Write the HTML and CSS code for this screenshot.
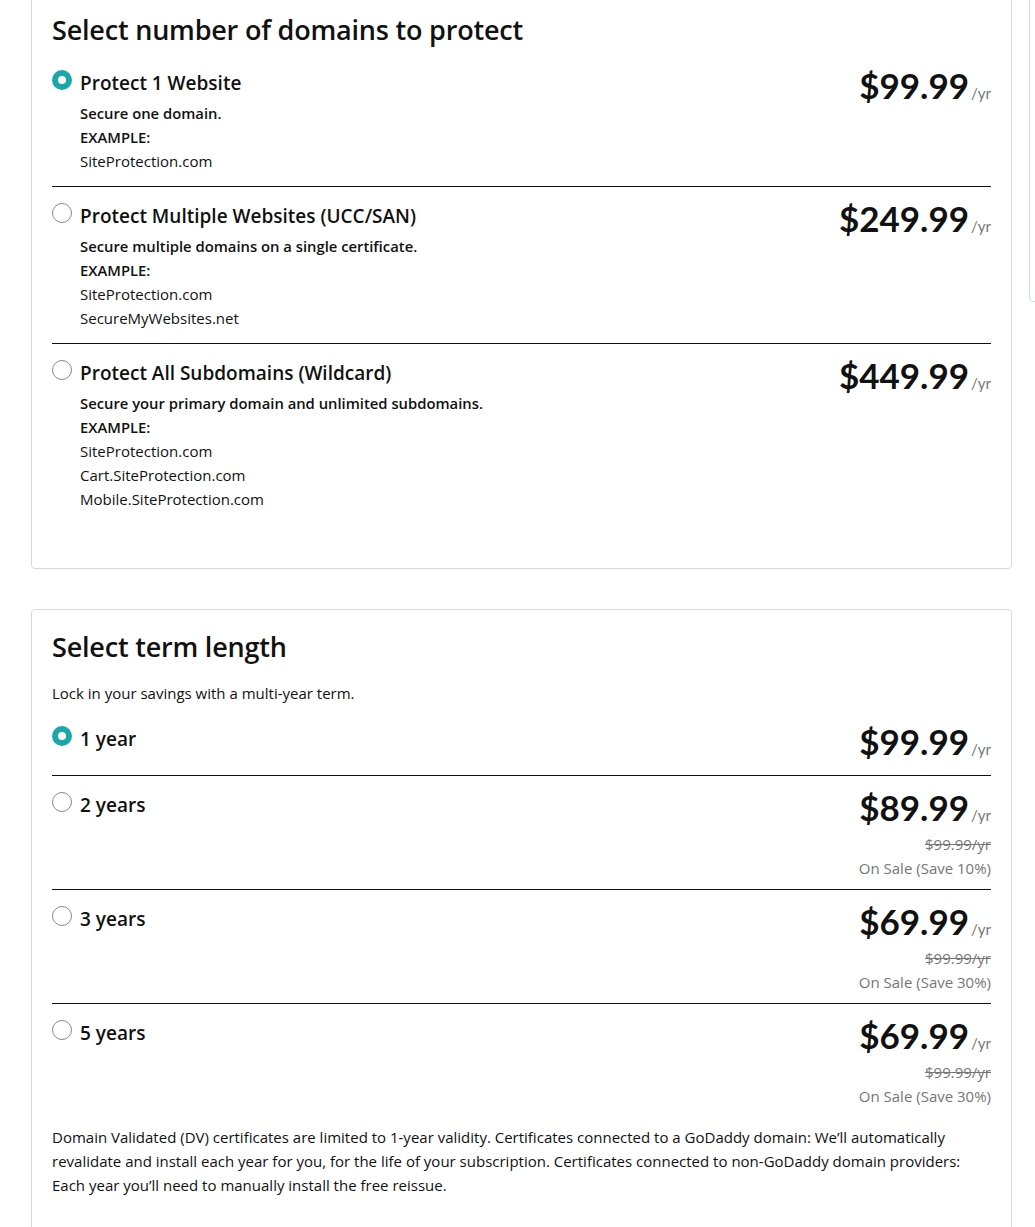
FILE: index.html
```html
<!DOCTYPE html>
<html lang="en">
<head>
<meta charset="utf-8">
<title>SSL options</title>
<link rel="stylesheet" href="styles.css">
</head>
<body>
<div class="page">
  <main class="main">
    <section class="card card-first">
      <h2 class="card-title">Select number of domains to protect</h2>
      <div class="options">
        <div class="option">
          <span class="radio is-checked"></span>
          <div class="opt-body">
            <div class="opt-title">Protect 1 Website</div>
            <div class="opt-desc">
              <div class="strong">Secure one domain.</div>
              <div class="strong">EXAMPLE:</div>
              <div>SiteProtection.com</div>
            </div>
          </div>
          <div class="price"><div class="price-main"><span class="amount">$99.99</span><span class="per">/yr</span></div></div>
        </div>
        <div class="option">
          <span class="radio"></span>
          <div class="opt-body">
            <div class="opt-title">Protect Multiple Websites (UCC/SAN)</div>
            <div class="opt-desc">
              <div class="strong">Secure multiple domains on a single certificate.</div>
              <div class="strong">EXAMPLE:</div>
              <div>SiteProtection.com</div>
              <div>SecureMyWebsites.net</div>
            </div>
          </div>
          <div class="price"><div class="price-main"><span class="amount">$249.99</span><span class="per">/yr</span></div></div>
        </div>
        <div class="option">
          <span class="radio"></span>
          <div class="opt-body">
            <div class="opt-title">Protect All Subdomains (Wildcard)</div>
            <div class="opt-desc">
              <div class="strong">Secure your primary domain and unlimited subdomains.</div>
              <div class="strong">EXAMPLE:</div>
              <div>SiteProtection.com</div>
              <div>Cart.SiteProtection.com</div>
              <div>Mobile.SiteProtection.com</div>
            </div>
          </div>
          <div class="price"><div class="price-main"><span class="amount">$449.99</span><span class="per">/yr</span></div></div>
        </div>
      </div>
    </section>

    <section class="card">
      <h2 class="card-title">Select term length</h2>
      <p class="intro">Lock in your savings with a multi-year term.</p>
      <div class="options">
        <div class="option term">
          <span class="radio is-checked"></span>
          <div class="opt-body"><div class="opt-title">1 year</div></div>
          <div class="price"><div class="price-main"><span class="amount">$99.99</span><span class="per">/yr</span></div></div>
        </div>
        <div class="option term">
          <span class="radio"></span>
          <div class="opt-body"><div class="opt-title">2 years</div></div>
          <div class="price">
            <div class="price-main"><span class="amount">$89.99</span><span class="per">/yr</span></div>
            <div class="was">$99.99/yr</div>
            <div class="sale">On Sale (Save 10%)</div>
          </div>
        </div>
        <div class="option term">
          <span class="radio"></span>
          <div class="opt-body"><div class="opt-title">3 years</div></div>
          <div class="price">
            <div class="price-main"><span class="amount">$69.99</span><span class="per">/yr</span></div>
            <div class="was">$99.99/yr</div>
            <div class="sale">On Sale (Save 30%)</div>
          </div>
        </div>
        <div class="option term">
          <span class="radio"></span>
          <div class="opt-body"><div class="opt-title">5 years</div></div>
          <div class="price">
            <div class="price-main"><span class="amount">$69.99</span><span class="per">/yr</span></div>
            <div class="was">$99.99/yr</div>
            <div class="sale">On Sale (Save 30%)</div>
          </div>
        </div>
      </div>
      <p class="note">Domain Validated (DV) certificates are limited to 1-year validity. Certificates connected to a GoDaddy domain: We’ll automatically revalidate and install each year for you, for the life of your subscription. Certificates connected to non-GoDaddy domain providers: Each year you’ll need to manually install the free reissue.</p>
    </section>
  </main>
  <aside class="side"></aside>
</div>
</body>
</html>
```

FILE: styles.css
```css
html, body {
  margin: 0;
  padding: 0;
  background: #fff;
  overflow: hidden;
}
body {
  font-family: "Open Sans", "Lato", sans-serif;
  color: #111;
  font-size: 15px;
}
.page {
  display: flex;
  align-items: flex-start;
  gap: 17px;
  padding-left: 31px;
  margin-top: -8px;
  width: 1400px;
}
.main {
  width: 981px;
  flex: none;
  display: flex;
  flex-direction: column;
  gap: 40px;
}
.side {
  width: 320px;
  height: 310px;
  flex: none;
  border: 1px solid #d4dbe0;
  border-radius: 4px;
  box-sizing: border-box;
}
.card {
  border: 1px solid #d4dbe0;
  border-radius: 4px;
  padding: 20px 20px 44px;
  min-height: 650px;
}
.card-first {
  min-height: 0;
}
.card-title {
  margin: 0 0 7px;
  font-size: 27px;
  line-height: 34px;
  font-weight: 600;
  letter-spacing: -0.2px;
}
.intro {
  margin: 17px 0 5px;
  font-size: 15px;
  line-height: 24px;
}
.option {
  display: flex;
  align-items: flex-start;
  padding: 9px 0;
  border-bottom: 1px solid #111;
}
.option:last-child {
  border-bottom: none;
}
.radio {
  flex: none;
  width: 20px;
  height: 20px;
  box-sizing: border-box;
  border-radius: 50%;
  border: 1px solid #8a8a8a;
  margin-top: 7px;
  margin-right: 8px;
  background: #fff;
}
.radio.is-checked {
  border: 6px solid #1aa7a6;
}
.opt-body {
  flex: 1;
  padding: 6px 0 4px;
}
.opt-title {
  font-size: 19px;
  line-height: 28px;
  font-weight: 600;
}
.opt-desc {
  margin-top: 4px;
  font-size: 15px;
  line-height: 24px;
}
.strong {
  font-weight: 600;
  font-size: 14.8px;
}
.price {
  text-align: right;
}
.price-main {
  display: flex;
  justify-content: flex-end;
  align-items: baseline;
  height: 44px;
  line-height: 44px;
  padding-bottom: 3px;
  white-space: nowrap;
  font-family: "Lato", sans-serif;
}
.amount {
  font-size: 35px;
  font-weight: 700;
}
.per {
  font-size: 15px;
  color: #767676;
  margin-left: 2px;
}
.was {
  font-size: 15px;
  line-height: 24px;
  color: #767676;
  text-decoration: line-through;
}
.sale {
  font-size: 15px;
  line-height: 24px;
  color: #767676;
}
.note {
  margin: 8px 0 0;
  font-size: 15px;
  line-height: 24px;
}
```
